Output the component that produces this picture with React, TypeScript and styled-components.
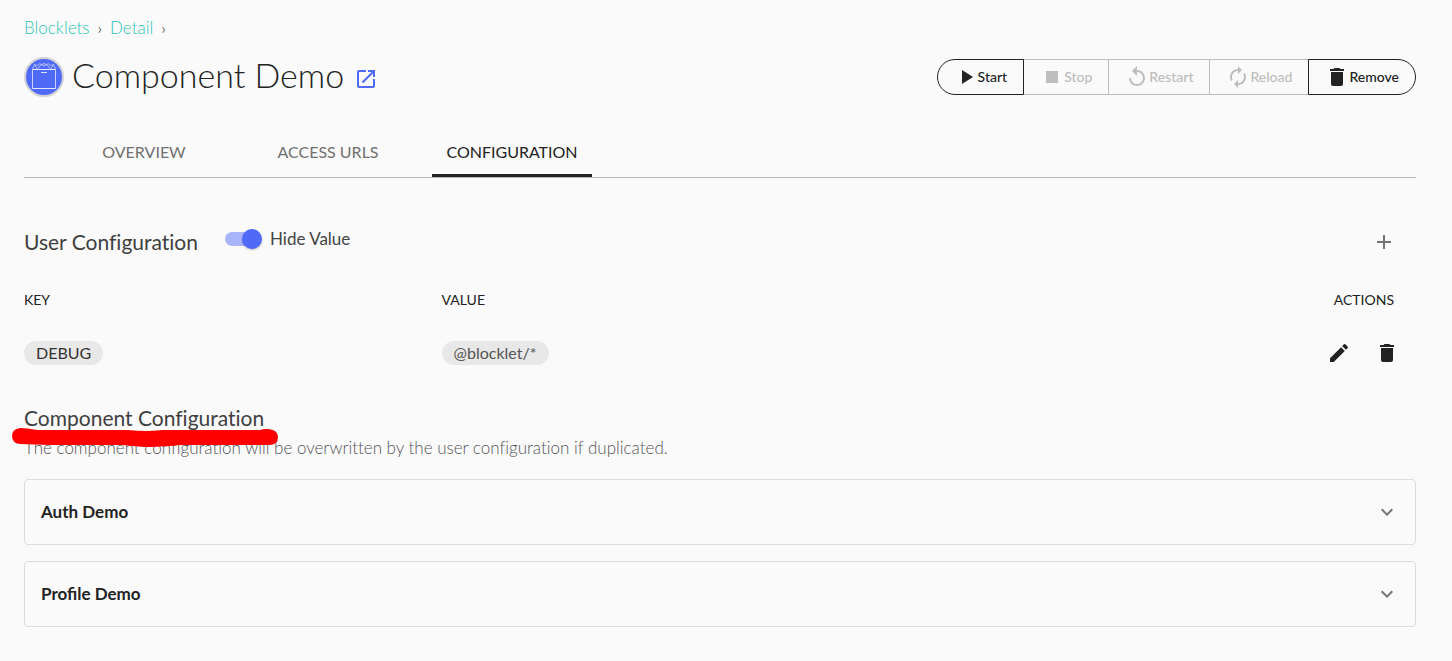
import React, { useState } from 'react';
import styled, { createGlobalStyle } from 'styled-components';
import {
  MdPlayArrow,
  MdStop,
  MdReplay,
  MdAutorenew,
  MdDelete,
  MdEdit,
  MdAdd,
  MdExpandMore,
  MdOpenInNew,
} from 'react-icons/md';

const GlobalStyle = createGlobalStyle`
  *, *::before, *::after { box-sizing: border-box; }
  body {
    margin: 0;
    background: #fafafa;
    color: #222;
    font-family: Lato, "Liberation Sans", sans-serif;
    font-size: 16px;
    line-height: 24px;
    font-variant-ligatures: none;
  }
  button { font-family: inherit; }
`;

const Page = styled.main`
  padding: 16px 36px 32px 24px;
`;

const Breadcrumb = styled.nav`
  display: flex;
  align-items: center;
  gap: 8px;
  font-size: 17px;
  color: #777;
`;

const Crumb = styled.a`
  color: #2cc4b6;
  font-weight: 300;
  text-decoration: none;
`;

const Separator = styled.span`
  font-size: 16px;
`;

const Header = styled.header`
  display: flex;
  align-items: center;
  justify-content: space-between;
  margin-top: 16px;
  height: 42px;
`;

const Title = styled.h1`
  display: flex;
  align-items: center;
  gap: 8px;
  margin: 0;
  color: #222;
  font-size: 34px;
  font-weight: 300;
  line-height: 40px;
`;

const TitleText = styled.span`
  padding-bottom: 4px;
`;

const OpenLink = styled.a`
  display: flex;
  margin: 4px 0 0 2px;
  color: #4f6af6;
`;

const ButtonGroup = styled.div`
  display: flex;
`;

const ActionButton = styled.button`
  display: flex;
  align-items: center;
  height: 36px;
  padding: 0 16px;
  border: 1px solid #222;
  background: transparent;
  color: #222;
  font-size: 14px;
  font-weight: 500;

  & + & { margin-left: -1px; }
  &:first-child { border-radius: 18px 0 0 18px; }
  &:last-child { border-radius: 0 18px 18px 0; }
  &:disabled { border-color: #bdbdbd; color: #bdbdbd; }
  &:not(:disabled) { position: relative; }
`;

const ActionLabel = styled.span`
  padding-bottom: 2px;
`;

const Tabs = styled.div`
  display: flex;
  gap: 24px;
  margin-top: 31px;
  padding-left: 40px;
  border-bottom: 1px solid #b8b8b8;
`;

const Tab = styled.button<{ $active: boolean }>`
  width: 160px;
  height: 48px;
  padding: 0;
  border: 0;
  border-bottom: 3px solid ${(p) => (p.$active ? '#222' : 'transparent')};
  background: transparent;
  color: ${(p) => (p.$active ? '#222' : '#707070')};
  font-size: 16px;
  text-transform: uppercase;
`;

const SectionHeader = styled.div`
  display: flex;
  align-items: center;
  height: 48px;
  margin-top: 40px;
  padding-right: 20px;
`;

const SectionTitle = styled.h2`
  margin: 0;
  color: #404040;
  font-size: 21px;
  font-weight: 400;
  line-height: 28px;
`;

const SwitchLabel = styled.label`
  display: flex;
  align-items: center;
  gap: 8px;
  margin: 0 auto 6px 27px;
  color: #444;
  font-size: 17px;
`;

const Switch = styled.input`
  appearance: none;
  display: flex;
  align-items: center;
  position: relative;
  width: 37px;
  height: 20px;
  margin: 0;

  &::before {
    content: '';
    position: absolute;
    inset: 3px 3px 3px 0;
    border-radius: 7px;
    background: #a9b5fa;
  }
  &::after {
    content: '';
    position: relative;
    width: 20px;
    height: 20px;
    border-radius: 50%;
    background: #4f6af6;
    box-shadow: 0 1px 2px rgba(0, 0, 0, 0.25);
  }
  &:checked::after { margin-left: auto; }
`;

const IconButton = styled.button`
  display: flex;
  padding: 0;
  border: 0;
  background: transparent;
  color: inherit;
`;

const AddButton = styled(IconButton)`
  color: #757575;
`;

const Table = styled.table`
  width: 100%;
  margin-top: 8px;
  border-collapse: collapse;
  table-layout: fixed;
`;

const HeadCell = styled.th<{ $width?: string; $end?: boolean }>`
  width: ${(p) => p.$width ?? 'auto'};
  height: 52px;
  padding: 0 ${(p) => (p.$end ? '22px' : '0')} 0 0;
  font-size: 14px;
  font-weight: 400;
  text-align: ${(p) => (p.$end ? 'right' : 'left')};
  text-transform: uppercase;
`;

const Cell = styled.td`
  height: 52px;
  padding: 0;
`;

const Chip = styled.span<{ $muted?: boolean }>`
  display: inline-block;
  padding: 0 12px;
  border-radius: 12px;
  background: #e8e8e8;
  color: ${(p) => (p.$muted ? '#555' : '#333')};
  vertical-align: middle;
`;

const RowActions = styled.div`
  display: flex;
  justify-content: flex-end;
  gap: 24px;
  padding: 2px 17px 0 0;
`;

const ComponentSection = styled.section`
  position: relative;
  margin-top: 26px;
`;

const Description = styled.p`
  margin: 4px 0 0;
  color: #555;
  font-size: 17px;
  font-weight: 300;
`;

const Marker = styled.svg`
  position: absolute;
  top: 24px;
  left: -14px;
  pointer-events: none;
`;

const PanelList = styled.div`
  display: grid;
  gap: 16px;
  margin-top: 19px;
`;

const Panel = styled.button`
  display: flex;
  align-items: center;
  justify-content: space-between;
  height: 66px;
  padding: 0 16px;
  border: 1px solid #dcdcdc;
  border-radius: 4px;
  background: transparent;
  color: #222;
  font-size: 17px;
  font-weight: 700;

  svg { color: #757575; }
`;

const PanelTitle = styled.span`
  padding-bottom: 2px;
`;

const BlockletLogo = () => (
  <svg width="40" height="40" viewBox="0 0 40 40" fill="none" aria-hidden="true">
    <circle cx="20" cy="20" r="19" fill="#4f6af6" stroke="#d3d3d6" strokeWidth="2" />
    <path d="M8.500 12.500h23v19h-23z" stroke="#c5cefd" />
    <path d="M8.500 31.500h23M8.500 12.500h23" stroke="#dfe4ff" />
    <path d="M17 15.500h6" stroke="#dfe4ff" />
    <path
      d="M8.500 12l2-4.500 3 1 2.500-2 2 2 2-2.500 2 2.500 2-2 2.500 2 3-1 2 4.500M10.500 8l3 4 4-5 2.500 2 2.500-2 4 5 3-4"
      stroke="#c5cefd"
      strokeWidth="0.8"
    />
  </svg>
);

const actions = [
  { label: 'Start', icon: MdPlayArrow, disabled: false },
  { label: 'Stop', icon: MdStop, disabled: true },
  { label: 'Restart', icon: MdReplay, disabled: true },
  { label: 'Reload', icon: MdAutorenew, disabled: true },
  { label: 'Remove', icon: MdDelete, disabled: false },
];

const tabs = ['Overview', 'Access URLs', 'Configuration'];
const components = ['Auth Demo', 'Profile Demo'];

export default function App() {
  const [tab, setTab] = useState('Configuration');
  const [hidden, setHidden] = useState(true);

  return (
    <Page>
      <GlobalStyle />
      <Breadcrumb aria-label="Breadcrumb">
        <Crumb href="#blocklets">Blocklets</Crumb>
        <Separator>›</Separator>
        <Crumb href="#detail">Detail</Crumb>
        <Separator>›</Separator>
      </Breadcrumb>

      <Header>
        <Title>
          <BlockletLogo />
          <TitleText>Component Demo</TitleText>
          <OpenLink href="#open" aria-label="Open">
            <MdOpenInNew size={24} />
          </OpenLink>
        </Title>
        <ButtonGroup>
          {actions.map(({ label, icon: Icon, disabled }) => (
            <ActionButton key={label} type="button" disabled={disabled}>
              <Icon size={24} />
              <ActionLabel>{label}</ActionLabel>
            </ActionButton>
          ))}
        </ButtonGroup>
      </Header>

      <Tabs role="tablist">
        {tabs.map((name) => (
          <Tab
            key={name}
            type="button"
            role="tab"
            aria-selected={tab === name}
            $active={tab === name}
            onClick={() => setTab(name)}
          >
            {name}
          </Tab>
        ))}
      </Tabs>

      <section>
        <SectionHeader>
          <SectionTitle>User Configuration</SectionTitle>
          <SwitchLabel>
            <Switch
              type="checkbox"
              role="switch"
              checked={hidden}
              onChange={(e) => setHidden(e.target.checked)}
            />
            Hide Value
          </SwitchLabel>
          <AddButton type="button" aria-label="Add">
            <MdAdd size={24} />
          </AddButton>
        </SectionHeader>
        <Table>
          <thead>
            <tr>
              <HeadCell $width="30%">Key</HeadCell>
              <HeadCell>Value</HeadCell>
              <HeadCell $end>Actions</HeadCell>
            </tr>
          </thead>
          <tbody>
            <tr>
              <Cell>
                <Chip>DEBUG</Chip>
              </Cell>
              <Cell>
                <Chip $muted>@blocklet/*</Chip>
              </Cell>
              <Cell>
                <RowActions>
                  <IconButton type="button" aria-label="Edit">
                    <MdEdit size={24} />
                  </IconButton>
                  <IconButton type="button" aria-label="Delete">
                    <MdDelete size={24} />
                  </IconButton>
                </RowActions>
              </Cell>
            </tr>
          </tbody>
        </Table>
      </section>

      <ComponentSection>
        <SectionTitle>Component Configuration</SectionTitle>
        <Description>
          The component configuration will be overwritten by the user configuration if duplicated.
        </Description>
        <Marker width="272" height="26" viewBox="0 0 272 26" aria-hidden="true">
          <path
            d="M10 0 Q16 0 28 2 H118 Q136 4 152 2 H250 C255 0 268 0 268 9 Q268 17 259 17 H170 Q150 19 134 19 L112 17 H40 L10 16 Q2 15 2 8 Q2 1 10 0Z"
            fill="#f00"
          />
        </Marker>
        <PanelList>
          {components.map((name) => (
            <Panel key={name} type="button" aria-expanded={false}>
              <PanelTitle>{name}</PanelTitle>
              <MdExpandMore size={24} />
            </Panel>
          ))}
        </PanelList>
      </ComponentSection>
    </Page>
  );
}
